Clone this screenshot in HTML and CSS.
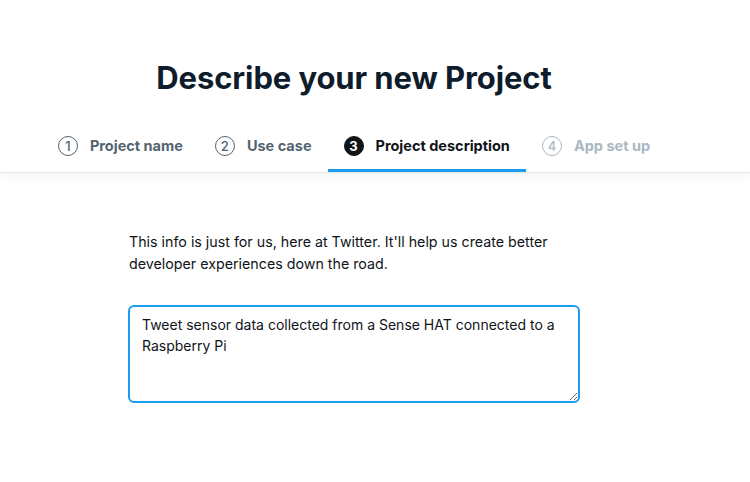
FILE: index.html
```html
<!DOCTYPE html>
<html lang="en">
<head>
<meta charset="utf-8">
<title>Describe your new Project</title>
<link rel="stylesheet" href="styles.css">
</head>
<body>
  <header class="header">
    <div class="inner">
      <h1 class="title">Describe your new Project</h1>
      <nav class="steps">
        <div class="step done"><span class="num">1</span><span class="label">Project name</span></div>
        <div class="step done"><span class="num">2</span><span class="label">Use case</span></div>
        <div class="step active"><span class="num">3</span><span class="label">Project description</span></div>
        <div class="step disabled"><span class="num">4</span><span class="label">App set up</span></div>
      </nav>
    </div>
  </header>
  <main class="inner content">
    <div class="form">
      <p class="info">This info is just for us, here at Twitter. It'll help us create better developer experiences down the road.</p>
      <textarea class="desc" autofocus>Tweet sensor data collected from a Sense HAT connected to a Raspberry Pi</textarea>
    </div>
  </main>
</body>
</html>
```
FILE: styles.css
```css
html, body {
  margin: 0;
  padding: 0;
  background: #fff;
  font-family: Inter, "Noto Sans", "Liberation Sans", sans-serif;
  color: #0f1419;
}
.inner {
  width: 708px;
}
.header {
  border-bottom: 1px solid #e3e8ec;
  box-shadow: 0 3px 10px rgba(20, 40, 60, 0.06);
}
.header .inner {
  display: flex;
  flex-direction: column;
  align-items: center;
}
.title {
  margin: 58px 0 0;
  font-size: 31px;
  line-height: 40px;
  font-weight: 700;
  color: #0f1c2b;
  letter-spacing: -0.1px;
}
.steps {
  display: flex;
  margin-top: 25px;
}
.step {
  display: flex;
  align-items: center;
  gap: 12px;
  height: 49px;
  padding: 0 16px 1px;
  box-sizing: border-box;
  border-bottom: 3px solid transparent;
  font-size: 14.5px;
  font-weight: 700;
}
.num {
  width: 20px;
  height: 20px;
  box-sizing: border-box;
  border-radius: 50%;
  border: 1.5px solid currentColor;
  display: flex;
  align-items: center;
  justify-content: center;
  font-size: 13px;
  font-weight: 500;
}
.step.done { color: #536471; }
.step.active { color: #0f1419; border-bottom-color: #1d9bf0; }
.step.active .num { background: #0f1419; border-color: #0f1419; color: #fff; font-weight: 700; }
.step.disabled { color: #aab8c2; }
.content {
  display: flex;
  justify-content: center;
}
.form {
  width: 452px;
  padding-top: 58px;
}
.info {
  margin: 0 0 0 1px;
  font-size: 14.25px;
  line-height: 22px;
  color: #0f1419;
}
.desc {
  display: block;
  margin-top: 30px;
  width: 452px;
  height: 98px;
  box-sizing: border-box;
  border: 2px solid #1d9bf0;
  border-radius: 6px;
  padding: 7px 12px;
  font-family: Inter, "Noto Sans", "Liberation Sans", sans-serif;
  font-size: 14px;
  line-height: 21px;
  color: #0f1419;
  outline: none;
  resize: vertical;
}
```
